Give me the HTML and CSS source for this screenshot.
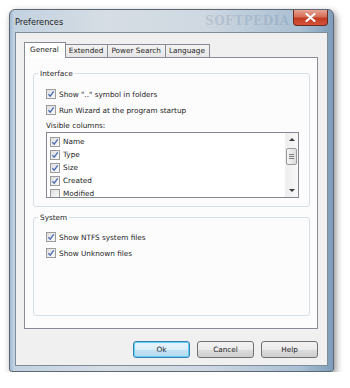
FILE: index.html
```html
<!DOCTYPE html>
<html lang="en">

<head>
    <meta charset="UTF-8">
    <title>Preferences</title>
    <link rel="stylesheet" href="styles.css">
</head>

<body>
    <div class="window">
        <div class="titlebar">
            <span class="title">Preferences</span>
            <span class="mark">SOFTPEDIA</span>
            <span class="close">
                <svg width="11" height="9" viewBox="0 0 11 9">
                    <path d="M1.5 1 L9.5 8 M9.5 1 L1.5 8" stroke="#fff" stroke-width="2.2" stroke-linecap="round" />
                </svg>
            </span>
        </div>

        <div class="client">
            <div class="tabs">
                <div class="tab active">General</div>
                <div class="tab">Extended</div>
                <div class="tab">Power Search</div>
                <div class="tab">Language</div>
            </div>

            <div class="page">
                <fieldset class="group interface">
                    <legend>Interface</legend>
                    <div class="row"><span class="cb on"></span>Show ".." symbol in folders</div>
                    <div class="row"><span class="cb on"></span>Run Wizard at the program startup</div>
                    <div class="label">Visible columns:</div>
                    <div class="listbox">
                        <div class="items">
                            <div class="item"><span class="cb on"></span>Name</div>
                            <div class="item"><span class="cb on"></span>Type</div>
                            <div class="item"><span class="cb on"></span>Size</div>
                            <div class="item"><span class="cb on"></span>Created</div>
                            <div class="item"><span class="cb"></span>Modified</div>
                        </div>
                        <div class="scrollbar">
                            <span class="arrow up"></span>
                            <span class="thumb"><i></i><i></i><i></i></span>
                            <span class="track"></span>
                            <span class="arrow down"></span>
                        </div>
                    </div>
                </fieldset>

                <fieldset class="group system">
                    <legend>System</legend>
                    <div class="row"><span class="cb on"></span>Show NTFS system files</div>
                    <div class="row"><span class="cb on"></span>Show Unknown files</div>
                </fieldset>
            </div>

            <div class="buttons">
                <button class="btn default">Ok</button>
                <button class="btn">Cancel</button>
                <button class="btn">Help</button>
            </div>
        </div>
    </div>
</body>

</html>
```

FILE: styles.css
```css
body {
    margin: 0;
    background: #fff;
    font-family: "DejaVu Sans", sans-serif;
    font-size: 7.3px;
    color: #1e1e1e;
}

.window {
    width: 325px;
    height: 363px;
    margin: 9px 0 0 9px;
    box-sizing: border-box;
    border: 1px solid #5b6775;
    border-radius: 6px 6px 3px 3px;
    padding: 0 5px 5px 5px;
    display: flex;
    flex-direction: column;
    background: linear-gradient(to right, #9fbbd6 0, #c3d2e0 4px, #d6dde4 30%, #cfd8e1 60%, #a9bfd3 90%, #7f9db9 100%);
    box-shadow: 2px 3px 7px rgba(0, 0, 0, 0.45);
}

.titlebar {
    height: 22px;
    display: flex;
    align-items: flex-start;
    position: relative;
}

.title {
    flex: 1;
    font-size: 8.2px;
    line-height: 22px;
    padding-top: 1px;
    color: #222;
}

.mark {
    position: absolute;
    left: 190px;
    top: 4px;
    font-family: "DejaVu Serif", serif;
    font-size: 12px;
    font-weight: bold;
    color: rgba(70, 100, 130, 0.18);
    letter-spacing: 0.5px;
}

.close {
    width: 35px;
    height: 16px;
    box-sizing: border-box;
    border: 1px solid #6d2a22;
    border-top: none;
    border-radius: 0 0 4px 4px;
    background: linear-gradient(#e8a493 0, #d56e57 45%, #c23c22 55%, #d5533a 100%);
    display: flex;
    align-items: center;
    justify-content: center;
    position: relative;
}

.client {
    flex: 1;
    box-sizing: border-box;
    border: 1px solid #7f8d9b;
    background: #f0f0f0;
    padding: 9px 9px 0 8px;
    display: flex;
    flex-direction: column;
}

.tabs {
    display: flex;
    height: 15px;
}

.tab {
    box-sizing: border-box;
    height: 13px;
    margin-top: 2px;
    border: 1px solid #898c95;
    border-bottom: none;
    border-left: none;
    background: linear-gradient(#f3f3f3, #e6e6e6);
    padding: 0 4px 0 3px;
    line-height: 12px;
}

.tab.active {
    height: 16px;
    margin-top: 0;
    border-left: 1px solid #898c95;
    background: #fff;
    position: relative;
    padding: 1px 6px 0 5px;
}

.page {
    height: 272px;
    box-sizing: border-box;
    border: 1px solid #898c95;
    background: #fcfcfd;
    padding: 10px 7px 0 8px;
}

.group {
    margin: 0;
    border: 1px solid #d5dfe5;
    border-radius: 3px;
    padding: 0 10px 8px 12px;
}

.group legend {
    padding: 0 2px;
    margin-left: -8px;
    line-height: 11px;
}

.interface {
    padding-top: 7px;
}

.system {
    margin-top: 5px;
    padding-top: 6px;
    height: 104px;
    box-sizing: border-box;
}

.row {
    height: 16px;
    display: flex;
    align-items: center;
}

.label {
    height: 14px;
    display: flex;
    align-items: center;
}

.cb {
    width: 10px;
    height: 10px;
    box-sizing: border-box;
    border: 1px solid #9c9c9c;
    background: linear-gradient(135deg, #dedede, #fbfbfb);
    margin-right: 3px;
    flex: none;
}

.cb.on {
    background:
        url("data:image/svg+xml,%3Csvg xmlns='http://www.w3.org/2000/svg' width='8' height='8'%3E%3Cpath d='M1.4 4.3 L3.2 6.2 L6.7 1.4' fill='none' stroke='%234a6cb3' stroke-width='1.3'/%3E%3C/svg%3E") center no-repeat,
        linear-gradient(135deg, #dedede, #fbfbfb);
}

.listbox {
    height: 66px;
    box-sizing: border-box;
    border: 1px solid #828790;
    background: #fff;
    display: flex;
    overflow: hidden;
}

.items {
    flex: 1;
    padding: 2px 0 0 3px;
}

.item {
    height: 13px;
    display: flex;
    align-items: center;
}

.scrollbar {
    width: 13px;
    display: flex;
    flex-direction: column;
    background: linear-gradient(to right, #eeeeee, #f8f8f8);
}

.arrow {
    height: 13px;
    display: flex;
    align-items: center;
    justify-content: center;
}

.arrow::after {
    content: "";
    border-left: 3px solid transparent;
    border-right: 3px solid transparent;
}

.arrow.up::after {
    border-bottom: 3px solid #3b3b3b;
}

.arrow.down::after {
    border-top: 3px solid #3b3b3b;
}

.thumb {
    height: 17px;
    margin: 2px 1px 0 1px;
    box-sizing: border-box;
    border: 1px solid #9a9a9a;
    border-radius: 2px;
    background: linear-gradient(to right, #f4f4f4, #dedede);
    display: flex;
    flex-direction: column;
    justify-content: center;
    align-items: center;
    gap: 1px;
}

.thumb i {
    width: 5px;
    height: 1px;
    background: #7d7d7d;
}

.track {
    flex: 1;
}

.buttons {
    display: flex;
    justify-content: flex-end;
    gap: 7px;
    margin-top: 12px;
}

.btn {
    width: 57px;
    height: 17px;
    padding: 0;
    border: 1px solid #707070;
    border-radius: 3px;
    background: linear-gradient(#f2f2f2 0, #ebebeb 50%, #dddddd 51%, #cfcfcf 100%);
    font-family: "DejaVu Sans", sans-serif;
    font-size: 7.3px;
    color: #1e1e1e;
}

.btn.default {
    border-color: #3c7fb1;
    box-shadow: inset 0 0 0 1px #5ad1f5;
    background: linear-gradient(#eaf5fb 0, #dceef8 50%, #c4e2f3 51%, #b8daee 100%);
}
```
